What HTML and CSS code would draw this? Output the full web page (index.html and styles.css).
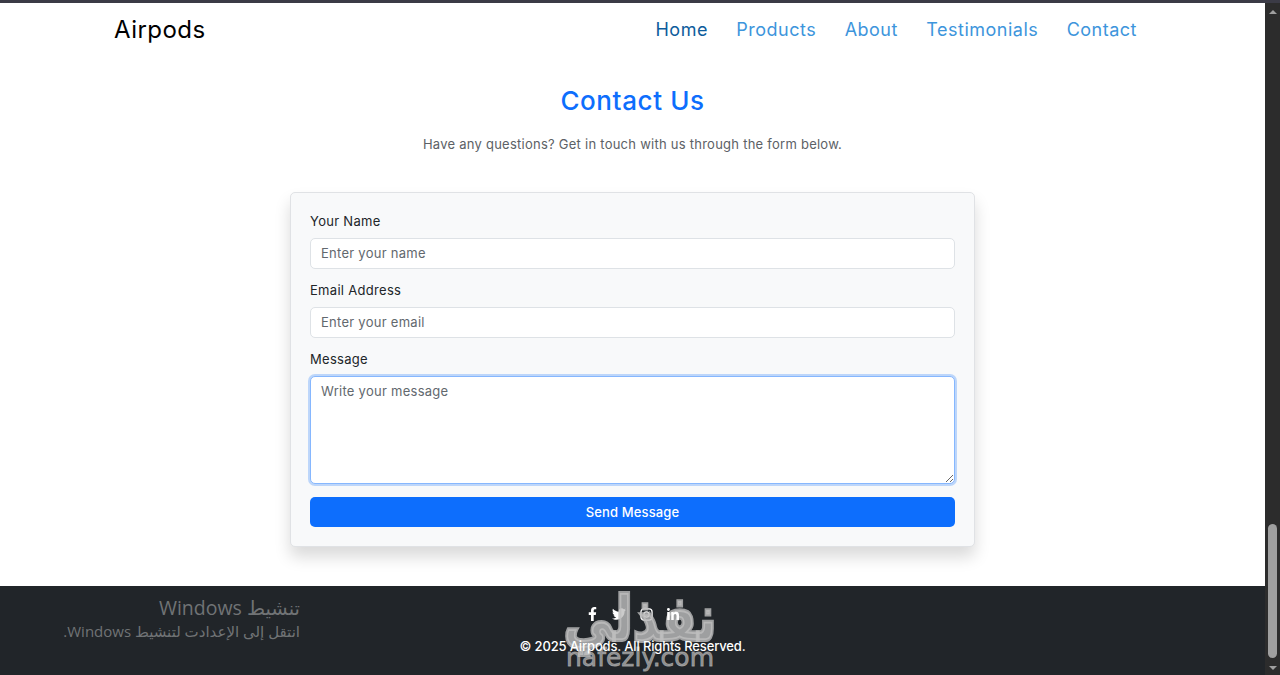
FILE: index.html
```html
<!DOCTYPE html>
<html lang="en">
<head>
    <meta charset="UTF-8">
    <meta name="viewport" content="width=device-width, initial-scale=1.0">
    <title>Airpods - Contact</title>
    <link rel="stylesheet" href="styles.css">
</head>
<body>
    <div class="top-strip"></div>
    <div class="shell">
        <div class="page">
            <nav class="navbar">
                <a href="#" class="brand">Airpods</a>
                <div class="nav-links">
                    <a href="#" class="active">Home</a>
                    <a href="#">Products</a>
                    <a href="#">About</a>
                    <a href="#">Testimonials</a>
                    <a href="#">Contact</a>
                </div>
            </nav>

            <main class="contact">
                <h2>Contact Us</h2>
                <p class="lead">Have any questions? Get in touch with us through the form below.</p>
                <form class="contact-form">
                    <label for="name">Your Name</label>
                    <input type="text" id="name" placeholder="Enter your name">
                    <label for="email">Email Address</label>
                    <input type="text" id="email" placeholder="Enter your email">
                    <label for="message">Message</label>
                    <textarea id="message" class="focused" placeholder="Write your message"></textarea>
                    <button type="button">Send Message</button>
                </form>
            </main>

            <footer class="footer">
                <div class="socials">
                    <a href="#" class="on-top"><svg width="9" height="14" viewBox="0 0 320 512"><path d="M279.14 288l14.22-92.66h-88.91v-60.13c0-25.35 12.42-50.06 52.24-50.06h40.42V6.26S260.43 0 225.36 0c-73.22 0-121.08 44.38-121.08 124.72v70.62H22.89V288h81.39v224h100.17V288z"/></svg></a>
                    <a href="#"><svg width="14" height="14" viewBox="0 0 512 512"><path d="M459.37 151.716c.325 4.548.325 9.097.325 13.645 0 138.72-105.583 298.558-298.558 298.558-59.452 0-114.68-17.219-161.137-47.106 8.447.974 16.568 1.299 25.34 1.299 49.055 0 94.213-16.568 130.274-44.832-46.132-.975-84.792-31.188-98.112-72.772 6.498.974 12.995 1.624 19.818 1.624 9.421 0 18.843-1.3 27.614-3.573-48.081-9.747-84.143-51.98-84.143-102.985v-1.299c13.969 7.797 30.214 12.67 47.431 13.319-28.264-18.843-46.781-51.005-46.781-87.391 0-19.492 5.197-37.36 14.294-52.954 51.655 63.675 129.3 105.258 216.365 109.807-1.624-7.797-2.599-15.918-2.599-24.04 0-57.828 46.782-104.934 104.934-104.934 30.213 0 57.502 12.67 76.67 33.137 23.715-4.548 46.456-13.645 66.599-25.34-7.798 24.366-24.366 44.833-46.132 57.827 21.117-2.273 41.584-8.122 60.426-16.243-14.292 20.791-32.161 39.308-52.628 54.253z"/></svg></a>
                    <a href="#"><svg width="13" height="13" viewBox="0 0 14 14" fill="none" stroke="#fff" stroke-width="1.4"><rect x="1" y="1" width="12" height="12" rx="3.2"/><circle cx="7" cy="7" r="2.8"/><circle cx="10.5" cy="3.5" r=".5" fill="#fff" stroke="none"/></svg></a>
                    <a href="#" class="on-top"><svg width="12" height="12" viewBox="0 0 448 448"><path d="M100.28 448H7.4V148.9h92.88zM53.79 108.1C24.09 108.1 0 83.5 0 53.8a53.79 53.79 0 0 1 107.58 0c0 29.7-24.1 54.3-53.79 54.3zM447.9 448h-92.68V302.4c0-34.7-.7-79.2-48.29-79.2-48.29 0-55.69 37.7-55.69 76.7V448h-92.78V148.9h89.08v40.8h1.3c12.4-23.5 42.69-48.3 87.88-48.3 94 0 111.28 61.9 111.28 142.3V448z"/></svg></a>
                </div>
                <p class="copyright">&copy; 2025 Airpods. All Rights Reserved.</p>
            </footer>
        </div>

        <div class="scrollbar">
            <span class="arrow-up"></span>
            <span class="track"><span class="thumb"></span></span>
            <span class="arrow-down"></span>
        </div>
    </div>

    <!-- overlays from the desktop, they sit above the page -->
    <div class="activation" dir="rtl">
        <div class="activation-title">تنشيط Windows</div>
        <div class="activation-text">انتقل إلى الإعدادت لتنشيط Windows.</div>
    </div>
    <div class="watermark">
        <div class="watermark-ar" dir="rtl">نفذلي</div>
        <div class="watermark-en">nafezly.com</div>
    </div>
</body>
</html>
```

FILE: styles.css
```css
* {
    box-sizing: border-box;
}

html, body {
    height: 100%;
}

body {
    margin: 0;
    overflow: hidden;
    display: flex;
    flex-direction: column;
    font-family: Inter, "Noto Sans", sans-serif;
    background: white;
    color: #212529;
}

.top-strip {
    height: 3px;
    flex: none;
    background: #3b3b46;
}

.shell {
    flex: 1;
    min-height: 0;
    display: flex;
}

.page {
    flex: 1;
    min-width: 0;
    display: flex;
    flex-direction: column;
}

.navbar {
    height: 52px;
    padding: 0 128px 0 114px;
    display: flex;
    justify-content: space-between;
    align-items: center;
}

.brand {
    font-size: 24px;
    letter-spacing: 0.45px;
    color: black;
    text-decoration: none;
}

.nav-links {
    display: flex;
    gap: 28.4px;
}

.nav-links a {
    font-size: 18px;
    letter-spacing: 0.5px;
    color: #3d95dc;
    text-decoration: none;
}

.nav-links a.active {
    color: #0d5c9c;
}

.contact {
    flex: 1;
    display: flex;
    flex-direction: column;
    align-items: center;
}

.contact h2 {
    margin: 28px 0 0;
    font-size: 26px;
    line-height: 35px;
    font-weight: 500;
    letter-spacing: 0.6px;
    color: #0d6efd;
}

.lead {
    margin: 16px 0 0;
    font-size: 13px;
    line-height: 20px;
    letter-spacing: 0.25px;
    color: #5c6166;
}

.contact-form {
    width: 685px;
    margin-top: 38px;
    padding: 19px;
    display: flex;
    flex-direction: column;
    background: #f8f9fa;
    border: 1px solid #e0e2e5;
    border-radius: 5px;
    box-shadow: 0 10px 16px rgba(0, 0, 0, 0.15);
}

.contact-form label {
    font-size: 13px;
    line-height: 18px;
    letter-spacing: 0.3px;
    margin-bottom: 7.5px;
}

.contact-form input,
.contact-form textarea {
    width: 100%;
    padding: 0 10px;
    font-family: inherit;
    font-size: 13px;
    letter-spacing: 0.27px;
    color: #212529;
    background: white;
    border: 1px solid #dee2e6;
    border-radius: 5px;
    outline: none;
}

.contact-form input {
    height: 31px;
    margin-bottom: 12.6px;
}

.contact-form ::placeholder {
    color: #62686e;
    opacity: 1;
}

.contact-form textarea {
    height: 108px;
    padding-top: 6px;
    margin-bottom: 13.3px;
    resize: vertical;
}

.contact-form textarea.focused {
    border-color: #86b7fe;
    box-shadow: 0 0 0 2px rgba(13, 110, 253, 0.25);
}

.contact-form button {
    height: 30px;
    font-family: inherit;
    font-size: 13px;
    font-weight: 500;
    letter-spacing: 0.15px;
    color: white;
    background: #0d6efd;
    border: none;
    border-radius: 5px;
}

.footer {
    height: 89px;
    flex: none;
    background: #212529;
    color: white;
    padding-top: 21px;
    display: flex;
    flex-direction: column;
    align-items: center;
}

.socials {
    display: flex;
    gap: 15px;
    align-items: center;
}

.socials a {
    width: 12px;
    height: 14px;
    display: flex;
    justify-content: center;
    align-items: center;
    color: white;
}

.socials a.on-top {
    position: relative;
    z-index: 2;
}

.socials svg {
    fill: white;
    flex: none;
}

.socials a:nth-child(3) svg {
    fill: none;
}

.copyright {
    position: relative;
    z-index: 2;
    margin: 16px 0 0;
    font-size: 13px;
    line-height: 18px;
    font-weight: 500;
    letter-spacing: -0.15px;
}

.scrollbar {
    width: 15px;
    flex: none;
    display: flex;
    flex-direction: column;
    align-items: center;
    background: #2c2c2c;
    padding: 7px 0 5px;
}

.track {
    flex: 1;
    width: 100%;
    display: flex;
    flex-direction: column;
    justify-content: flex-end;
    align-items: center;
    padding: 0 0 8px;
}

.thumb {
    width: 9px;
    height: 134px;
    border-radius: 5px;
    background: #9f9f9f;
}

.arrow-up {
    border: 4px solid transparent;
    border-top: none;
    border-bottom: 4px solid #9f9f9f;
}

.arrow-down {
    border: 4px solid transparent;
    border-bottom: none;
    border-top: 4px solid #9f9f9f;
}

.activation {
    position: absolute;
    right: 980px;
    top: 596px;
    font-family: "Open Sans", "DejaVu Sans", sans-serif;
    color: #707375;
    white-space: nowrap;
}

.activation-title {
    font-size: 19.5px;
    line-height: 24px;
}

.activation-text {
    font-size: 15px;
    line-height: 22px;
}

.watermark {
    position: absolute;
    left: 540px;
    top: 589px;
    width: 200px;
    text-align: center;
    color: rgba(190, 190, 190, 0.8);
    pointer-events: none;
    font-family: "DejaVu Sans", sans-serif;
    font-weight: bold;
}

.watermark-ar {
    font-size: 50px;
    line-height: 60px;
    -webkit-text-stroke: 3px rgba(190, 190, 190, 0.8);
    transform: scaleY(1.25);
}

.watermark-en {
    margin-top: -4px;
    font-size: 25px;
    line-height: 26px;
    font-weight: normal;
    -webkit-text-stroke: 0.8px rgba(170, 170, 170, 0.8);
    color: rgba(170, 170, 170, 0.8);
}
```
